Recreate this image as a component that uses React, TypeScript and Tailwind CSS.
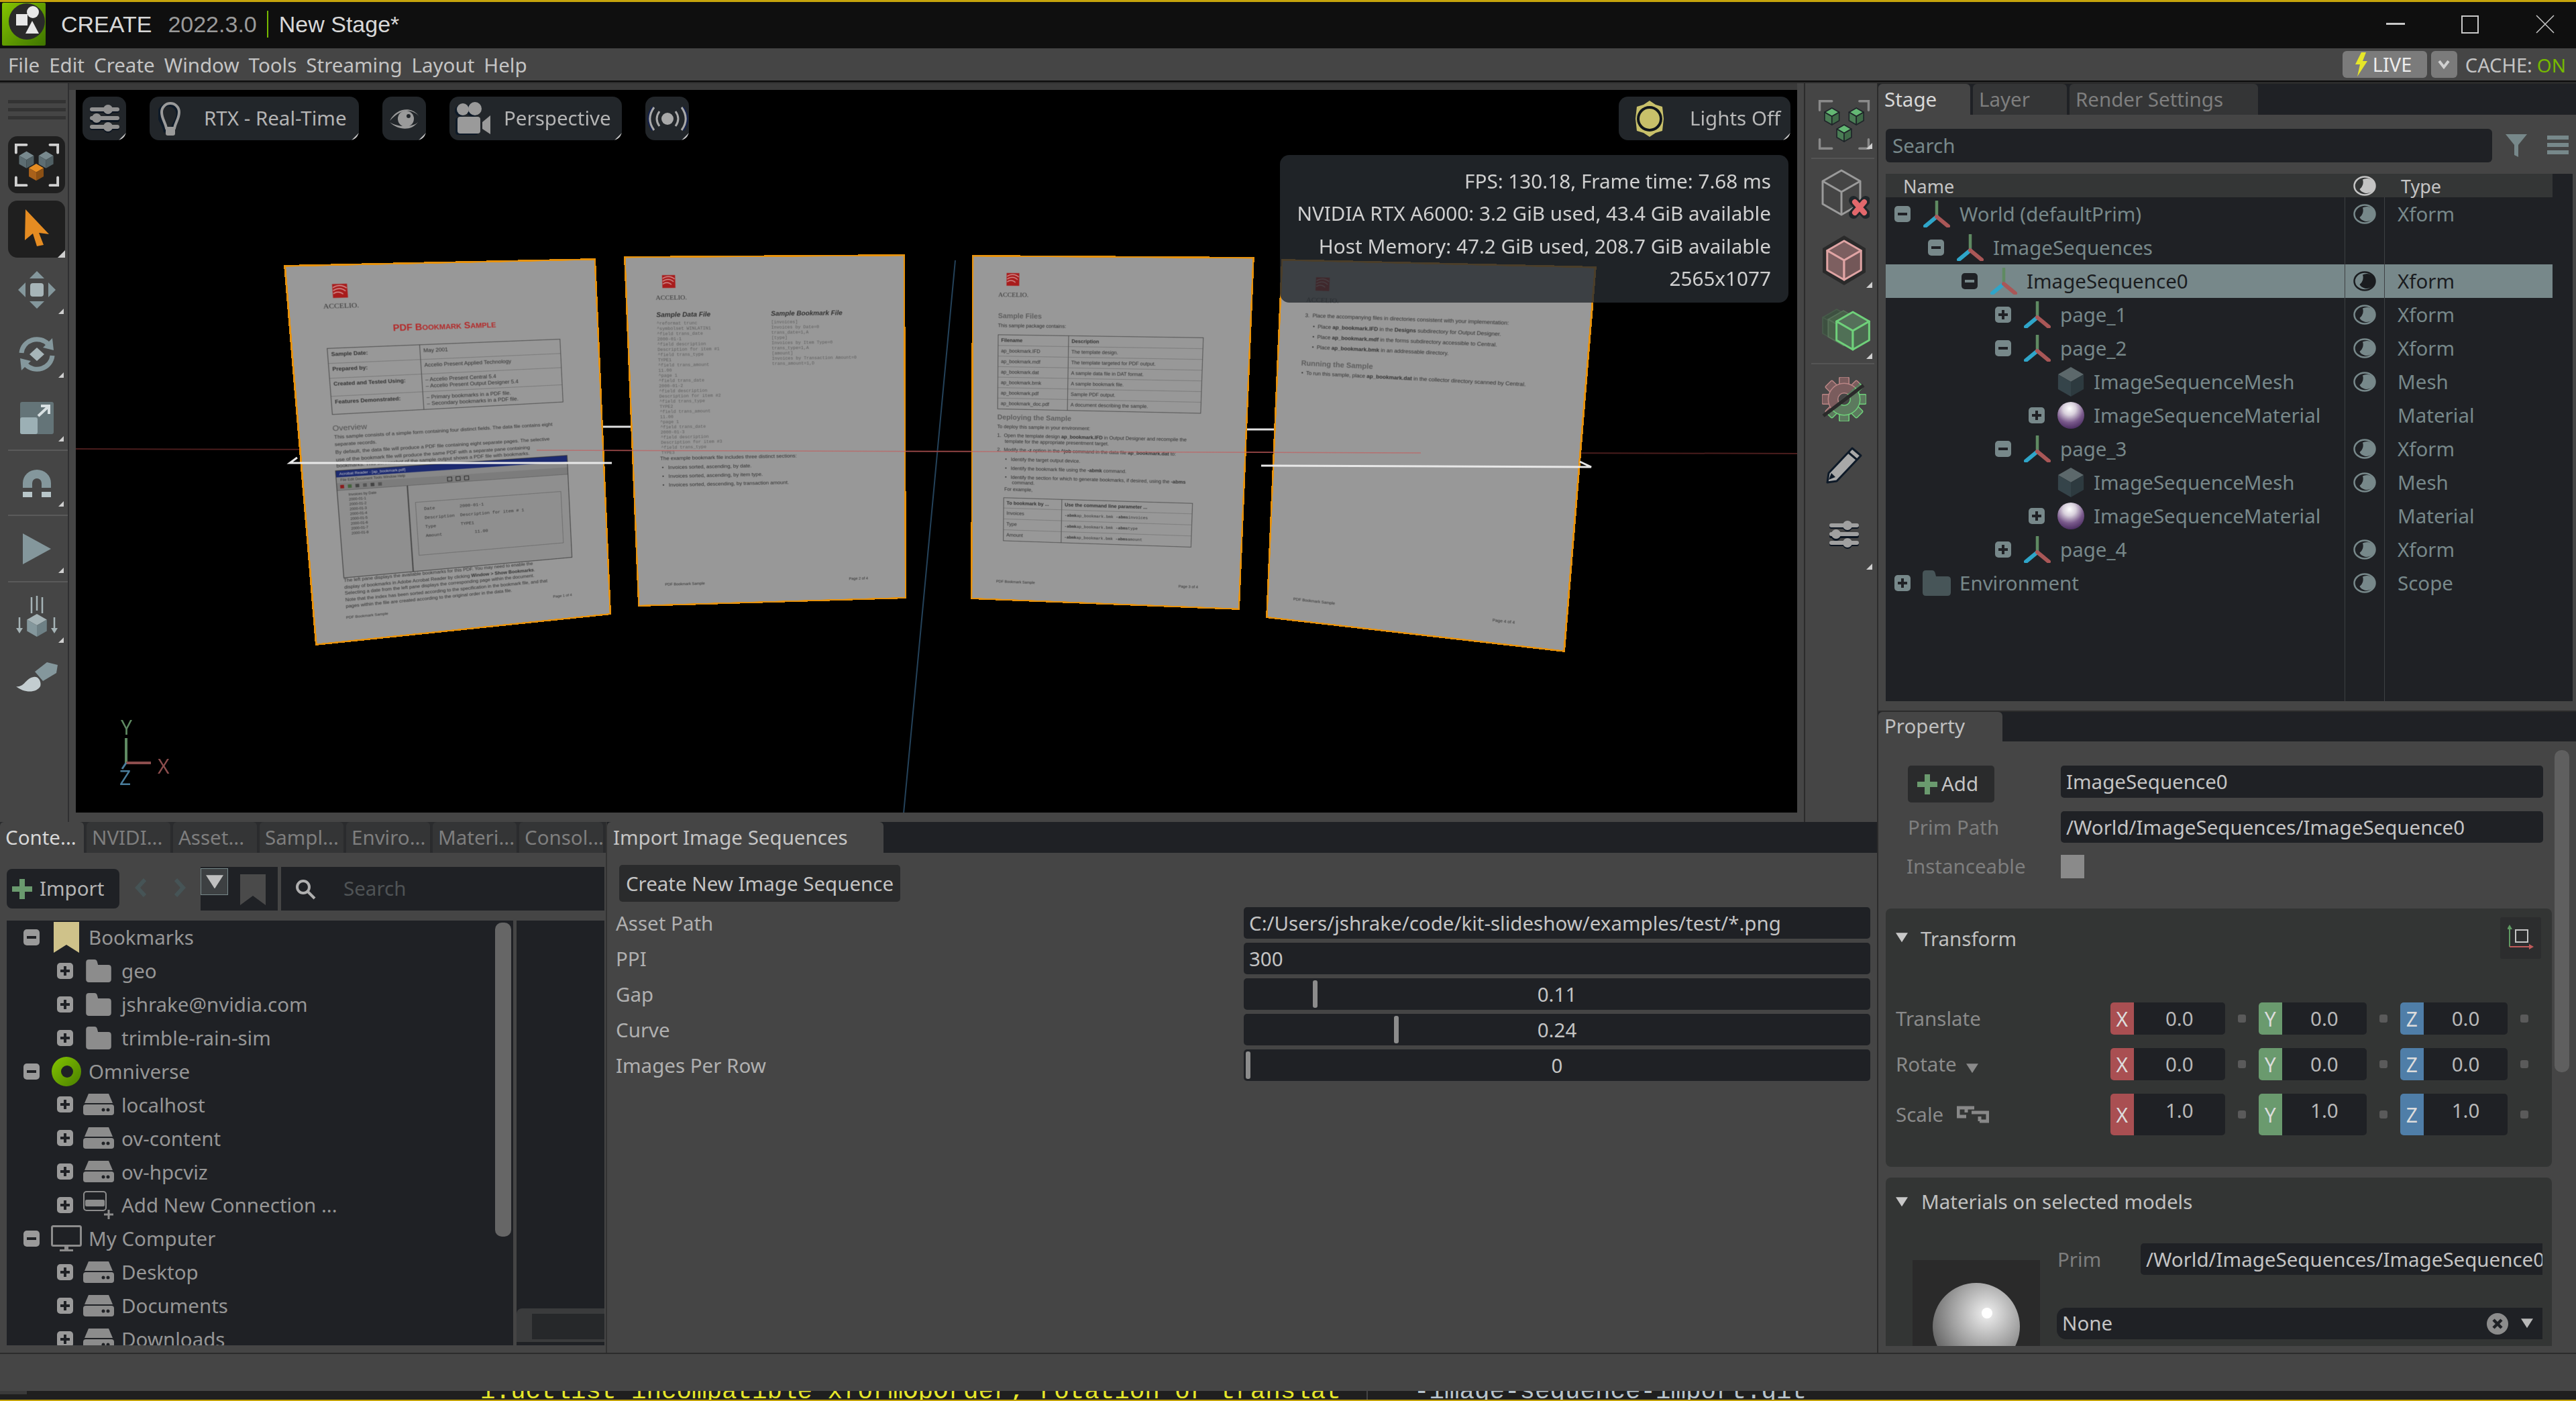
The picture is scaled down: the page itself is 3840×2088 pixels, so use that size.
import React from "react";

type P = [number, number];
const VX = 113;
const VY = 134;

function quadMatrix(w: number, h: number, q: P[]) {
  const [[x0, y0], [x1, y1], [x2, y2], [x3, y3]] = q.map(([x, y]) => [x - VX, y - VY]);
  const dx1 = x1 - x2, dx2 = x3 - x2, sx = x0 - x1 + x2 - x3;
  const dy1 = y1 - y2, dy2 = y3 - y2, sy = y0 - y1 + y2 - y3;
  const den = dx1 * dy2 - dx2 * dy1;
  const g = (sx * dy2 - dx2 * sy) / den;
  const k = (dx1 * sy - sx * dy1) / den;
  const a = x1 - x0 + g * x1, b = x3 - x0 + k * x3;
  const d = y1 - y0 + g * y1, e = y3 - y0 + k * y3;
  return `matrix3d(${a / w},${d / w},0,${g / w},${b / h},${e / h},0,${k / h},0,0,1,0,${x0},${y0},0,1)`;
}

function Iso({ cx, cy, r, t, l, rr, stroke, sw = 0 }: { cx: number; cy: number; r: number; t: string; l: string; rr: string; stroke?: string; sw?: number }) {
  const a = r * 0.87, b = r * 0.5;
  return (
    <g stroke={stroke} strokeWidth={sw} strokeLinejoin="round">
      <polygon fill={t} points={`${cx},${cy - r} ${cx + a},${cy - b} ${cx},${cy} ${cx - a},${cy - b}`} />
      <polygon fill={l} points={`${cx - a},${cy - b} ${cx},${cy} ${cx},${cy + r} ${cx - a},${cy + b}`} />
      <polygon fill={rr} points={`${cx + a},${cy - b} ${cx},${cy} ${cx},${cy + r} ${cx + a},${cy + b}`} />
    </g>
  );
}

function Brackets({ c, w = 4 }: { c: string; w?: number }) {
  return (
    <g fill="none" stroke={c} strokeWidth={w} strokeLinecap="round">
      <path d="M4 16V4H20" /><path d="M56 4H68V16" /><path d="M4 54V66H20" /><path d="M56 66H68V54" />
    </g>
  );
}

function Corner({ c = "#c9c9c9" }: { c?: string }) {
  return (
    <svg width="11" height="11" viewBox="0 0 11 11" className="absolute right-0 bottom-0">
      <polygon points="11,0 11,11 0,11" fill={c} />
    </svg>
  );
}

const TG = "#84979c";

function SliderIcon({ c = "#909090", shadow = "#0b1420" }: { c?: string; shadow?: string }) {
  const r = (y: number, x: number, col: string) => (
    <g key={`${y}${col}`}>
      <rect x="4" y={y - 3} width="44" height="6" rx="3" fill={col} />
      <circle cx={x} cy={y} r="7" fill={col} />
    </g>
  );
  return (
    <svg width="52" height="46" viewBox="0 0 52 46">
      {r(11, 31, shadow)}{r(25, 14, shadow)}{r(37, 31, shadow)}
      {r(9, 31, c)}{r(22, 14, c)}{r(35, 31, c)}
    </svg>
  );
}

function LeftTool({ children, corner = true, h = "h-[95px]" }: { children: React.ReactNode; corner?: boolean; h?: string }) {
  return (
    <div className={`relative w-[85px] ${h} flex items-center justify-center shrink-0`}>
      {children}
      {corner && <span className="absolute right-[2px] bottom-[12px]"><svg width="8" height="8" viewBox="0 0 8 8" className="block"><polygon points="8,0 8,8 0,8" fill="#cfcfcf" /></svg></span>}
    </div>
  );
}

function Sep() {
  return <div className="h-[2px] w-[90px] bg-[#5a5a5a] shrink-0" />;
}

function LeftToolbar() {
  return (
    <div className="w-[101px] shrink-0 flex flex-col items-start pl-[12px] pt-[25px]">
      <div className="flex flex-col gap-[7px] w-[86px]">
        <div className="h-[5px] bg-[#333]" /><div className="h-[5px] bg-[#333]" /><div className="h-[5px] bg-[#333]" />
      </div>
      <div className="mt-[25px] w-[85px] h-[85px] rounded-[14px] bg-[#1f1f1f] flex items-center justify-center">
        <svg width="70" height="70" viewBox="0 0 72 70">
          <Brackets c="#d0d0d0" />
          <Iso cx={20} cy={27} r={13} t="#78898e" l="#5d6d72" rr="#505f63" />
          <Iso cx={50} cy={27} r={13} t="#78898e" l="#5d6d72" rr="#505f63" />
          <Iso cx={35} cy={46} r={13} t="#e58c22" l="#a9611a" rr="#8b5014" />
        </svg>
      </div>
      <div className="relative mt-[11px] w-[85px] h-[85px] rounded-[14px] bg-[#1f1f1f] flex items-center justify-center">
        <svg width="40" height="56" viewBox="0 0 40 56" className="-mt-[6px]"><polygon points="3,1 38,38 23,36 30,54 20,56 14,37 2,47" fill="#e58c22" /></svg>
        <Corner c="#cfcfcf" />
      </div>
      <LeftTool h="h-[96px]">
        <svg width="58" height="58" viewBox="0 0 58 58" fill={TG}>
          <polygon points="29,1 40,12 18,12" /><polygon points="29,57 40,46 18,46" /><polygon points="1,29 12,18 12,40" /><polygon points="57,29 46,18 46,40" />
          <rect x="19" y="19" width="20" height="20" rx="4" fill="#a7b5b8" />
        </svg>
      </LeftTool>
      <LeftTool>
        <svg width="58" height="56" viewBox="0 0 58 56" fill="none" stroke={TG} strokeWidth="7">
          <path d="M6 26A23 22 0 0 1 46 13" /><path d="M52 30A23 22 0 0 1 12 43" />
          <polygon points="52,4 54,22 38,18" fill={TG} stroke="none" /><polygon points="6,52 4,34 20,38" fill={TG} stroke="none" />
          <polygon points="29,18 40,28 29,38 18,28" fill="#a7b5b8" stroke="none" />
        </svg>
      </LeftTool>
      <LeftTool>
        <svg width="52" height="50" viewBox="0 0 52 50">
          <rect x="1" y="1" width="50" height="48" rx="3" fill="#647478" />
          <rect x="1" y="24" width="26" height="25" rx="3" fill="#9cb0b5" />
          <path d="M28 22L43 8M32 7H44V19" stroke="#d8e0e2" strokeWidth="4" fill="none" />
        </svg>
      </LeftTool>
      <Sep />
      <LeftTool>
        <svg width="50" height="46" viewBox="0 0 50 46">
          <path d="M4 30V23A21 20 0 0 1 46 23V30H32V23A7 7 0 0 0 18 23V30Z" fill={TG} />
          <rect x="4" y="36" width="14" height="8" fill="#b8c6c9" /><rect x="32" y="36" width="14" height="8" fill="#b8c6c9" />
        </svg>
      </LeftTool>
      <Sep />
      <LeftTool h="h-[97px]">
        <svg width="44" height="48" viewBox="0 0 44 48"><polygon points="1,1 43,24 1,47" fill={TG} /></svg>
      </LeftTool>
      <Sep />
      <LeftTool h="h-[102px]">
        <svg width="62" height="62" viewBox="0 0 62 62">
          <path d="M23 2V26M31 0V22M39 2V26" stroke="#a5b3b6" strokeWidth="2.5" />
          <path d="M5 32V50M57 32V50" stroke="#a5b3b6" strokeWidth="2.5" />
          <polygon points="0,48 10,48 5,56" fill="#a5b3b6" /><polygon points="52,48 62,48 57,56" fill="#a5b3b6" />
          <Iso cx={31} cy={44} r={17} t="#a5b3b6" l="#84979c" rr="#6e8085" />
        </svg>
      </LeftTool>
      <div className="w-[85px] h-[80px] flex items-center justify-center">
        <svg width="62" height="46" viewBox="0 0 62 46">
          <polygon points="62,4 46,0 28,14 40,28 60,16" fill={TG} />
          <path d="M0 36C12 38 14 24 26 22C34 20 38 30 36 36C30 46 12 46 0 36Z" fill="#c3cdd0" />
        </svg>
      </div>
    </div>
  );
}

function GearIcon() {
  const teeth = [0, 45, 90, 135, 180, 225, 270, 315];
  const gear = (fill: string, stroke: string) => (
    <g fill={fill} stroke={stroke} strokeWidth="1.5">
      {teeth.map((t) => <rect key={t} x="25" y="0" width="14" height="14" rx="2" transform={`rotate(${t} 32 32)`} />)}
      <circle cx="32" cy="32" r="23" />
      <circle cx="32" cy="32" r="9" fill="#454545" />
    </g>
  );
  return (
    <svg width="66" height="66" viewBox="0 0 64 64">
      <defs>
        <clipPath id="gearTop"><polygon points="0,0 64,0 0,58" /></clipPath>
        <clipPath id="gearBot"><polygon points="64,0 64,64 0,64 0,58" /></clipPath>
      </defs>
      <g clipPath="url(#gearTop)">{gear("#7a5c5d", "#b98585")}</g>
      <g clipPath="url(#gearBot)">{gear("#5c7a5e", "#6fd07a")}</g>
      <line x1="2" y1="56" x2="60" y2="12" stroke="#2a2a2a" strokeWidth="5" />
    </svg>
  );
}

function RightTool({ children, h, corner = true }: { children: React.ReactNode; h: string; corner?: boolean }) {
  return (
    <div className={`relative w-full ${h} flex items-center justify-center shrink-0`}>
      {children}
      {corner && <span className="absolute right-[6px] bottom-[6px]"><svg width="9" height="9" viewBox="0 0 9 9" className="block"><polygon points="9,0 9,9 0,9" fill="#cfcfcf" /></svg></span>}
    </div>
  );
}

function RightToolbar() {
  return (
    <div className="w-[110px] shrink-0 border-l-2 border-[#2b2b2b] flex flex-col pt-[20px] ml-[10px] pl-[9px] pr-[2px]">
      <RightTool h="h-[84px]">
        <svg width="82" height="80" viewBox="0 0 72 70">
          <Brackets c="#8a8a8a" w={3} />
          <Iso cx={20} cy={24} r={11} t="#64b874" l="#4a7d55" rr="#3f6b48" stroke="#20262a" sw={1.5} />
          <Iso cx={52} cy={24} r={11} t="#64b874" l="#4a7d55" rr="#3f6b48" stroke="#20262a" sw={1.5} />
          <Iso cx={36} cy={46} r={11} t="#64b874" l="#4a7d55" rr="#3f6b48" stroke="#20262a" sw={1.5} />
        </svg>
      </RightTool>
      <div className="h-[2px] w-[94px] bg-[#555] mt-[7px] shrink-0" />
      <RightTool h="h-[104px]" corner={false}>
        <svg width="76" height="76" viewBox="0 0 76 76">
          <g fill="none" stroke="#9a9a9a" strokeWidth="3" strokeLinejoin="round">
            <polygon points="34,3 62,19 62,53 34,69 6,53 6,19" />
            <path d="M6 19L34 35L62 19M34 35V69" />
          </g>
          <path d="M52 48L70 68M70 48L52 68" stroke="#20262a" strokeWidth="14" strokeLinecap="round" />
          <path d="M54 50L68 66M68 50L54 66" stroke="#e2686c" strokeWidth="8" strokeLinecap="round" />
        </svg>
      </RightTool>
      <RightTool h="h-[94px]">
        <svg width="68" height="76" viewBox="0 0 68 76">
          <polygon points="34,1 66,20 66,56 34,75 2,56 2,20" fill="#2a2a2a" />
          <Iso cx={34} cy={38} r={29} t="#7d5f60" l="#7d5f60" rr="#735758" stroke="#e0a4a4" sw={3} />
        </svg>
      </RightTool>
      <RightTool h="h-[106px]">
        <svg width="78" height="78" viewBox="0 0 78 78">
          <Iso cx={28} cy={36} r={24} t="#3d5040" l="#3d5040" rr="#3d5040" stroke="#475a4a" sw={2} />
          <Iso cx={38} cy={40} r={26} t="#486049" l="#486049" rr="#486049" stroke="#567058" sw={2} />
          <Iso cx={52} cy={44} r={28} t="#55705a" l="#507056" rr="#4b6850" stroke="#6fd07a" sw={3} />
        </svg>
      </RightTool>
      <div className="h-[2px] w-[94px] bg-[#555] shrink-0" />
      <RightTool h="h-[104px]" corner={false}><GearIcon /></RightTool>
      <RightTool h="h-[92px]" corner={false}>
        <svg width="56" height="56" viewBox="0 0 56 56">
          <polygon points="40,3 53,14 17,52 3,54 5,40" fill="#a8a8a8" stroke="#0e1a28" strokeWidth="3" strokeLinejoin="round" />
          <path d="M34 9L47 20" stroke="#0e1a28" strokeWidth="3" />
          <polygon points="5,50 9,40 15,46" fill="#0e1a28" />
        </svg>
      </RightTool>
      <RightTool h="h-[116px]">
        <SliderIcon c="#a0a0a0" />
      </RightTool>
    </div>
  );
}

function PageFrame({ q, children }: { q: P[]; children: React.ReactNode }) {
  return (
    <div
      className="absolute left-0 top-0 w-[1000px] h-[1300px] bg-[#989898] border-[6px] border-[#e8920c] overflow-hidden origin-top-left"
      style={{ transform: quadMatrix(1000, 1300, q) }}
    >
      <div className="relative w-full h-full blur-[1px] text-[#303030] font-['Liberation_Sans',sans-serif]">{children}</div>
    </div>
  );
}

function T({ x, y, s = 20, b = false, c, m = false, children }: { x: number; y: number; s?: number; b?: boolean; c?: string; m?: boolean; children: React.ReactNode }) {
  return (
    <div
      className={`absolute whitespace-nowrap leading-none ${b ? "font-bold" : ""} ${m ? "font-['Liberation_Mono',monospace]" : ""}`}
      style={{ left: x, top: y, fontSize: s, color: c }}
    >
      {children}
    </div>
  );
}

function Logo({ x, y, tx, ty }: { x: number; y: number; tx: number; ty: number }) {
  return (
    <>
      <svg className="absolute" style={{ left: x, top: y }} width="46" height="46" viewBox="0 0 46 46">
        <rect width="46" height="46" fill="#a81c1c" />
        <path d="M2 12C16 2 32 4 44 14M2 22C16 12 30 14 40 24M2 32C12 24 24 26 32 34" stroke="#d8a0a0" strokeWidth="3" fill="none" />
      </svg>
      <T x={tx} y={ty} s={24} c="#333"><span className="font-['Liberation_Serif',serif]">ACCELIO.</span></T>
    </>
  );
}

function Table({ x, y, w, div, rows, hs = 40 }: { x: number; y: number; w: number; div: number; rows: [React.ReactNode, React.ReactNode][]; hs?: number }) {
  return (
    <div className="absolute border-2 border-[#444]" style={{ left: x, top: y, width: w }}>
      {rows.map((r, i) => (
        <div key={i} className="flex border-b border-[#555] last:border-b-0" style={{ minHeight: hs }}>
          <div className="border-r-2 border-[#444] px-[10px] py-[8px] text-[18px] leading-[22px] whitespace-nowrap" style={{ width: div }}>{r[0]}</div>
          <div className="px-[10px] py-[8px] text-[18px] leading-[22px] whitespace-nowrap">{r[1]}</div>
        </div>
      ))}
    </div>
  );
}

function Page1() {
  const shot = ["Invoices by Date", "2000-01-1", "2000-01-2", "2000-01-3", "2000-01-4", "2000-01-5", "2000-01-6", "2000-01-7", "2000-01-8"];
  return (
    <PageFrame q={[[423, 395], [888, 385], [911, 916], [470, 962]]}>
      <Logo x={135} y={60} tx={103} ty={120} />
      <T x={314} y={197} s={31} b c="#b42828">PDF B<span className="text-[24px]">OOKMARK</span> S<span className="text-[24px]">AMPLE</span></T>
      <Table x={104} y={272} w={756} div={290} hs={50} rows={[
        [<b>Sample Date:</b>, "May 2001"],
        [<b>Prepared by:</b>, "Accelio Present Applied Technology"],
        [<b>Created and Tested Using:</b>, <span>– Accelio Present Central 5.4<br />– Accelio Present Output Designer 5.4</span>],
        [<b>Features Demonstrated:</b>, <span>– Primary bookmarks in a PDF file.<br />– Secondary bookmarks in a PDF file.</span>],
      ]} />
      <T x={102} y={530} s={26} c="#505050">Overview</T>
      <T x={105} y={565} s={17}>This sample consists of a simple form containing four distinct fields. The data file contains eight</T>
      <T x={105} y={590} s={17}>separate records.</T>
      <T x={105} y={617} s={17}>By default, the data file will produce a PDF file containing eight separate pages. The selective</T>
      <T x={105} y={643} s={17}>use of the bookmark file will produce the same PDF with a separate pane containing</T>
      <T x={105} y={664} s={17}>bookmarks. This screenshot of the sample output shows a PDF file with bookmarks.</T>
      <div className="absolute left-[100px] top-[688px] w-[765px] h-[377px] bg-[#8f8f8f] border-2 border-[#333] overflow-hidden">
        <div className="h-[22px] bg-[#1c2a70] text-[#ccc] text-[13px] pl-[10px] leading-[22px]">Acrobat Reader - [ap_bookmark.pdf]</div>
        <div className="h-[20px] bg-[#888] text-[12px] pl-[12px] leading-[20px]">File Edit Document Tools Window Help</div>
        <div className="h-[26px] bg-[#7c7c7c] border-b border-[#444] flex items-center gap-[12px] pl-[10px]">
          <span className="w-[12px] h-[12px] bg-[#8a1c1c]" /><span className="w-[12px] h-[12px] bg-[#44643c]" />
          <span className="w-[12px] h-[12px] bg-[#444]" /><span className="w-[12px] h-[12px] bg-[#555]" /><span className="w-[12px] h-[12px] bg-[#444]" /><span className="w-[12px] h-[12px] bg-[#555]" />
          <span className="ml-[200px] w-[16px] h-[16px] border-2 border-[#222]" /><span className="w-[16px] h-[16px] border-2 border-[#222]" /><span className="w-[16px] h-[16px] border-2 border-[#222]" />
        </div>
        <div className="flex h-full">
          <div className="w-[225px] border-r-4 border-[#444] pl-[10px] pt-[8px] text-[12px] leading-[17px]">
            {shot.map((s) => <div key={s} className="pl-[24px]">{s}</div>)}
          </div>
          <div className="flex-1 relative">
            <div className="absolute left-[20px] top-[60px] w-[490px] h-[190px] border border-[#444] font-['Liberation_Mono',monospace] text-[15px] leading-[32px] pl-[26px] pt-[10px]">
              <div>Date &nbsp; &nbsp; &nbsp; &nbsp; 2000-01-1</div>
              <div>Description &nbsp;Description for item # 1</div>
              <div>Type &nbsp; &nbsp; &nbsp; &nbsp; TYPE1</div>
              <div>Amount &nbsp; &nbsp; &nbsp; &nbsp; &nbsp; &nbsp;11.00</div>
            </div>
          </div>
        </div>
      </div>
      <T x={100} y={1066} s={16}>The left pane displays the available bookmarks for this PDF. You may need to enable the</T>
      <T x={100} y={1090} s={16}>display of bookmarks in Adobe Acrobat Reader by clicking <b>Window &gt; Show Bookmarks</b>.</T>
      <T x={100} y={1111} s={16}>Selecting a date from the left pane displays the corresponding page within the document.</T>
      <T x={100} y={1135} s={16}>Note that the index has been sorted according to the specification in the bookmark file, and that</T>
      <T x={100} y={1158} s={16}>pages within the file are created according to the original order in the data file.</T>
      <T x={791} y={1197} s={13}>Page 1 of 4</T>
      <T x={98} y={1199} s={13}>PDF Bookmark Sample</T>
    </PageFrame>
  );
}

function Page2() {
  const lines = ["^reformat trunc", "^symbolset WINLATIN1", "^field trans_date", "2000-01-1", "^field description", "Description for item #1", "^field trans_type", "TYPE1", "^field trans_amount", "11.00", "^page 1", "^field trans_date", "2000-01-2", "^field description", "Description for item #2", "^field trans_type", "TYPE2", "^field trans_amount", "11.00", "^page 1", "^field trans_date", "2000-01-3", "^field description", "Description for item #3", "^field trans_type", "TYPE3"];
  const right = ["[invoices]", "Invoices by Date=0", "trans_date=1,A", "[type]", "Invoices by Item Type=0", "trans_type=1,A", "[amount]", "Invoices by Transaction Amount=0", "trans_amount=1,D"];
  return (
    <PageFrame q={[[930, 382], [1349, 379], [1351, 892], [951, 904]]}>
      <Logo x={125} y={62} tx={100} ty={130} />
      <T x={100} y={192} s={24} b><i>Sample Data File</i></T>
      <T x={508} y={192} s={24} b><i>Sample Bookmark File</i></T>
      {lines.map((l, i) => <T key={i} m x={100} y={228 + i * 19} s={16} c="#5e5e5e">{l}</T>)}
      {right.map((l, i) => <T key={i} m x={508} y={228 + i * 19} s={16} c="#5e5e5e">{l}</T>)}
      <T x={95} y={722} s={19}>The example bookmark file includes three distinct sections:</T>
      {["Invoices sorted, ascending, by date.", "Invoices sorted, ascending, by item type.", "Invoices sorted, descending, by transaction amount."].map((l, i) => (
        <T key={l} x={100} y={756 + i * 33} s={19}>•&nbsp;&nbsp;&nbsp;{l}</T>
      ))}
      <T x={96} y={1204} s={14}>PDF Bookmark Sample</T>
      <T x={778} y={1202} s={14}>Page 2 of 4</T>
    </PageFrame>
  );
}

function Page3() {
  return (
    <PageFrame q={[[1449, 380], [1870, 383], [1848, 909], [1447, 893]]}>
      <Logo x={120} y={58} tx={90} ty={124} />
      <T x={90} y={200} s={26} b c="#5e5e5e">Sample Files</T>
      <T x={90} y={240} s={18}>This sample package contains:</T>
      <Table x={90} y={282} w={738} div={256} hs={39} rows={[
        [<b>Filename</b>, <b>Description</b>],
        ["ap_bookmark.IFD", "The template design."],
        ["ap_bookmark.mdf", "The template targeted for PDF output."],
        ["ap_bookmark.dat", "A sample data file in DAT format."],
        ["ap_bookmark.bmk", "A sample bookmark file."],
        ["ap_bookmark.pdf", "Sample PDF output."],
        ["ap_bookmark_doc.pdf", "A document describing the sample."],
      ]} />
      <T x={90} y={575} s={26} b c="#5e5e5e">Deploying the Sample</T>
      <T x={90} y={615} s={18}>To deploy this sample in your environment:</T>
      <T x={90} y={648} s={18}>1.&nbsp;&nbsp;Open the template design <b>ap_bookmark.IFD</b> in Output Designer and recompile the</T>
      <T x={118} y={670} s={18}>template for the appropriate presentment target.</T>
      <T x={90} y={702} s={18}>2.&nbsp;&nbsp;Modify the <b>-z</b> option in the <b>^job</b> command in the data file <b>ap_bookmark.dat</b> to:</T>
      <T x={120} y={738} s={18}>•&nbsp;&nbsp;&nbsp;Identify the target output device.</T>
      <T x={120} y={772} s={18}>•&nbsp;&nbsp;&nbsp;Identify the bookmark file using the <b>-abmk</b> command.</T>
      <T x={120} y={806} s={18}>•&nbsp;&nbsp;&nbsp;Identify the section for which to generate bookmarks, if desired, using the <b>-abms</b></T>
      <T x={146} y={826} s={18}>command.</T>
      <T x={118} y={852} s={18}>For example,</T>
      <Table x={115} y={893} w={695} div={216} hs={38} rows={[
        [<b>To bookmark by ...</b>, <b>Use the command line parameter ...</b>],
        ["Invoices", <span className="font-['Liberation_Mono',monospace] text-[15px]"><b>-abmk</b>ap_bookmark.bmk <b>-abms</b>invoices</span>],
        ["Type", <span className="font-['Liberation_Mono',monospace] text-[15px]"><b>-abmk</b>ap_bookmark.bmk <b>-abms</b>type</span>],
        ["Amount", <span className="font-['Liberation_Mono',monospace] text-[15px]"><b>-abmk</b>ap_bookmark.bmk <b>-abms</b>amount</span>],
      ]} />
      <T x={90} y={1212} s={14}>PDF Bookmark Sample</T>
      <T x={768} y={1205} s={14}>Page 3 of 4</T>
    </PageFrame>
  );
}

function Page4() {
  return (
    <PageFrame q={[[1910, 386], [2380, 397], [2333, 972], [1887, 921]]}>
      <Logo x={115} y={54} tx={85} ty={120} />
      <T x={84} y={178} s={18}>3.&nbsp;&nbsp;Place the accompanying files in directories consistent with your implementation:</T>
      <T x={112} y={216} s={18}>•&nbsp;&nbsp;Place <b>ap_bookmark.IFD</b> in the <b>Designs</b> subdirectory for Output Designer.</T>
      <T x={112} y={252} s={18}>•&nbsp;&nbsp;Place <b>ap_bookmark.mdf</b> in the forms subdirectory accessible to Central.</T>
      <T x={112} y={288} s={18}>•&nbsp;&nbsp;Place <b>ap_bookmark.bmk</b> in an addressable directory.</T>
      <T x={78} y={342} s={25} b c="#5e5e5e">Running the Sample</T>
      <T x={80} y={380} s={18}>•&nbsp;&nbsp;To run this sample, place <b>ap_bookmark.dat</b> in the collector directory scanned by Central.</T>
      <T x={88} y={1204} s={14}>PDF Bookmark Sample</T>
      <T x={759} y={1202} s={14}>Page 4 of 4</T>
    </PageFrame>
  );
}

function VpBtn({ w, children }: { w: string; children: React.ReactNode }) {
  return <div className={`relative ${w} h-[65px] rounded-[14px] bg-[#22262a] flex items-center shrink-0 overflow-hidden text-[#b4b4b4] text-[29.5px]`}>{children}<Corner /></div>;
}

function Viewport() {
  const x = (v: number) => v - VX;
  const y = (v: number) => v - VY;
  return (
    <div className="relative w-[2566px] h-[1077px] bg-black overflow-hidden shrink-0">
      <svg className="absolute inset-0" width="2566" height="1077">
        <line x1={x(1424)} y1={y(388)} x2={x(1347)} y2={y(1212)} stroke="#24425a" strokeWidth="2" />
        <line x1="0" y1={y(669)} x2="2566" y2={y(676)} stroke="#4a1d1d" strokeWidth="2" />
        <line x1={x(897)} y1={y(636)} x2={x(945)} y2={y(636)} stroke="#e0e0e0" strokeWidth="3" />
        <line x1={x(1859)} y1={y(640)} x2={x(1905)} y2={y(640)} stroke="#e0e0e0" strokeWidth="3" />
      </svg>
      <Page2 />
      <Page3 />
      <Page1 />
      <Page4 />
      <svg className="absolute inset-0" width="2566" height="1077">
        <line x1={x(800)} y1={y(671)} x2={x(2118)} y2={y(675)} stroke="#c26060" strokeWidth="1.5" opacity="0.7" />
        <path d={`M${x(443)} ${y(682)}L${x(432)} ${y(690)}H${x(912)}`} stroke="#e8e8e8" strokeWidth="3" fill="none" />
        <path d={`M${x(1880)} ${y(694)}L${x(2372)} ${y(696)}L${x(2355)} ${y(688)}`} stroke="#e8e8e8" strokeWidth="3" fill="none" />
      </svg>

      <div className="absolute left-[10px] top-[10px] flex gap-[35px]">
        <VpBtn w="w-[65px]"><div className="pl-[7px]"><SliderIcon /></div></VpBtn>
        <VpBtn w="w-[312px]">
          <svg width="36" height="52" viewBox="0 0 36 52" className="ml-[13px] shrink-0">
            <path d="M12 42C10 30 3 28 3 17A14 14 0 0 1 31 17C31 28 24 30 22 42Z" fill="none" stroke="#0e1a28" strokeWidth="5" transform="translate(-2 2)" />
            <path d="M12 40C10 30 5 26 5 16A13 13 0 0 1 31 16C31 26 26 30 24 40Z" fill="none" stroke="#9a9a9a" strokeWidth="4" />
            <rect x="11" y="40" width="14" height="11" rx="3" fill="#9a9a9a" />
          </svg>
          <span className="ml-[32px] whitespace-nowrap">RTX - Real-Time</span>
        </VpBtn>
        <VpBtn w="w-[65px]">
          <svg width="48" height="38" viewBox="0 0 48 38" className="ml-[9px]">
            <path d="M2 22C12 2 36 0 46 16C40 8 30 6 22 8C14 10 8 16 2 22Z" fill="#9a9a9a" />
            <circle cx="26" cy="19" r="12" fill="#9a9a9a" />
            <circle cx="30" cy="15" r="3" fill="#22262a" />
            <path d="M2 24C14 36 34 38 44 24C36 32 14 32 2 24Z" fill="#9a9a9a" />
          </svg>
        </VpBtn>
        <VpBtn w="w-[257px]">
          <svg width="56" height="50" viewBox="0 0 56 50" className="ml-[7px] shrink-0">
            <g fill="#0e1a28" transform="translate(-2 2)"><circle cx="12" cy="11" r="9" /><circle cx="30" cy="10" r="10" /><rect x="4" y="21" width="34" height="26" rx="4" /></g>
            <g fill="#9a9a9a"><circle cx="13" cy="11" r="9" /><circle cx="31" cy="10" r="10" /><rect x="5" y="22" width="34" height="25" rx="4" /><polygon points="42,30 54,20 54,48 42,40" /></g>
          </svg>
          <span className="ml-[18px] whitespace-nowrap">Perspective</span>
        </VpBtn>
        <VpBtn w="w-[65px]">
          <svg width="64" height="40" viewBox="0 0 64 40" className="ml-[1px]">
            <g fill="none" stroke="#16224a" strokeWidth="4"><path d="M10 3C2 14 2 26 10 37" /><path d="M55 3C63 14 63 26 55 37" /></g>
            <g fill="none" stroke="#a8a8a8" strokeWidth="3"><path d="M12 3C4 14 4 26 12 37" /><path d="M53 3C61 14 61 26 53 37" /><path d="M20 9C15 16 15 24 20 31" /><path d="M44 9C49 16 49 24 44 31" /></g>
            <circle cx="32" cy="20" r="9" fill="#a8a8a8" />
          </svg>
        </VpBtn>
      </div>

      <div className="absolute left-[2300px] top-[10px]">
        <VpBtn w="w-[256px]">
          <svg width="46" height="58" viewBox="0 0 46 58" className="ml-[23px] shrink-0">
            <polygon points="23,2 32,8 42,11 44,29 42,47 32,50 23,56 14,50 4,47 2,29 4,11 14,8" fill="#c8c06a" />
            <circle cx="23" cy="29" r="19" fill="#11161c" />
            <circle cx="23" cy="29" r="15" fill="#c8c06a" />
          </svg>
          <span className="ml-[37px] whitespace-nowrap text-[#b8b8b8]">Lights Off</span>
        </VpBtn>
      </div>

      <div className="absolute left-[1795px] top-[97px] w-[758px] h-[220px] rounded-[14px] bg-[rgba(38,43,48,0.81)] pr-[26px] pt-[15px] text-right text-[29.7px] leading-[48.4px] text-[#d0d0d0]">
        <div>FPS: 130.18, Frame time: 7.68 ms</div>
        <div>NVIDIA RTX A6000: 3.2 GiB used, 43.4 GiB available</div>
        <div>Host Memory: 47.2 GiB used, 208.7 GiB available</div>
        <div>2565x1077</div>
      </div>

      <div className="absolute left-[60px] top-[940px] w-[140px] h-[100px] text-[30px] leading-none">
        <svg className="absolute left-0 top-0" width="140" height="100">
          <line x1="15" y1="26" x2="15" y2="64" stroke="#5f8a62" strokeWidth="4" />
          <line x1="15" y1="63" x2="52" y2="63" stroke="#8c4d4d" strokeWidth="4" />
          <line x1="15" y1="63" x2="9" y2="72" stroke="#4a7d9c" strokeWidth="3" />
        </svg>
        <span className="absolute left-[7px] top-[-5px] text-[#5f8a62]">Y</span>
        <span className="absolute left-[62px] top-[53px] text-[#8c4d4d]">X</span>
        <span className="absolute left-[5px] top-[70px] text-[#4a7d9c]">Z</span>
      </div>
    </div>
  );
}

function Exp({ plus = false, dark = false, c = "#77888a" }: { plus?: boolean; dark?: boolean; c?: string }) {
  return (
    <svg width="24" height="24" viewBox="0 0 24 24" className="shrink-0">
      <rect width="24" height="24" rx="5" fill={dark ? "#1f2125" : c} />
      <rect x="5" y="10" width="14" height="4" fill={dark ? "#77888a" : "#1f2125"} />
      {plus && <rect x="10" y="5" width="4" height="14" fill={dark ? "#77888a" : "#1f2125"} />}
    </svg>
  );
}

function AxisIcon() {
  return (
    <svg width="40" height="40" viewBox="0 0 40 40" className="shrink-0">
      <path d="M20 1V24" stroke="#5f8a62" strokeWidth="4.5" strokeLinecap="round" />
      <path d="M20 24L3 38" stroke="#2fa5c9" strokeWidth="6" strokeLinecap="round" />
      <path d="M20 24L37 38" stroke="#a95757" strokeWidth="6" strokeLinecap="round" />
    </svg>
  );
}

function MeshIcon() {
  return (
    <svg width="40" height="46" viewBox="0 0 40 46" className="shrink-0">
      <Iso cx={20} cy={23} r={22} t="#5c686b" l="#35444a" rr="#2d3a3f" />
    </svg>
  );
}

let sphereId = 0;
function MaterialIcon() {
  const id = `sp${sphereId++}`;
  return (
    <svg width="40" height="42" viewBox="0 0 40 42" className="shrink-0">
      <defs>
        <radialGradient id={id} cx="0.45" cy="0.25" r="0.8">
          <stop offset="0" stopColor="#ffffff" />
          <stop offset="0.3" stopColor="#d8d0dc" />
          <stop offset="0.65" stopColor="#7a5a8c" />
          <stop offset="1" stopColor="#43265a" />
        </radialGradient>
      </defs>
      <circle cx="20" cy="21" r="20" fill={`url(#${id})`} />
    </svg>
  );
}

function FolderIcon({ c = "#475558", w = 42, h = 38 }: { c?: string; w?: number; h?: number }) {
  return (
    <svg width={w} height={h} viewBox="0 0 42 38" className="shrink-0">
      <path d="M0 5Q0 0 5 0H14Q18 0 19 5L20 9H37Q42 9 42 14V33Q42 38 37 38H5Q0 38 0 33Z" fill={c} />
    </svg>
  );
}

function Eye({ c = "#77888a" }: { c?: string }) {
  return (
    <svg width="34" height="30" viewBox="0 0 34 30" className="shrink-0">
      <ellipse cx="17" cy="15" rx="15.5" ry="13.5" fill="none" stroke={c} strokeWidth="2.5" />
      <path d="M14 5.5A12 11 0 1 1 9.5 20A13 13 0 0 0 14 5.5Z" fill={c} />
    </svg>
  );
}

type Kind = "axis" | "mesh" | "mat" | "folder";
type Row = { d: number; exp?: "+" | "-"; k: Kind; n: string; t?: string; eye?: boolean; sel?: boolean };

const stageRows: Row[] = [
  { d: 0, exp: "-", k: "axis", n: "World (defaultPrim)", t: "Xform", eye: true },
  { d: 1, exp: "-", k: "axis", n: "ImageSequences" },
  { d: 2, exp: "-", k: "axis", n: "ImageSequence0", t: "Xform", eye: true, sel: true },
  { d: 3, exp: "+", k: "axis", n: "page_1", t: "Xform", eye: true },
  { d: 3, exp: "-", k: "axis", n: "page_2", t: "Xform", eye: true },
  { d: 4, k: "mesh", n: "ImageSequenceMesh", t: "Mesh", eye: true },
  { d: 4, exp: "+", k: "mat", n: "ImageSequenceMaterial", t: "Material" },
  { d: 3, exp: "-", k: "axis", n: "page_3", t: "Xform", eye: true },
  { d: 4, k: "mesh", n: "ImageSequenceMesh", t: "Mesh", eye: true },
  { d: 4, exp: "+", k: "mat", n: "ImageSequenceMaterial", t: "Material" },
  { d: 3, exp: "+", k: "axis", n: "page_4", t: "Xform", eye: true },
  { d: 0, exp: "+", k: "folder", n: "Environment", t: "Scope", eye: true },
];

const stagePad = ["pl-[13px]", "pl-[63px]", "pl-[113px]", "pl-[163px]", "pl-[213px]"];

function StageRow({ r }: { r: Row }) {
  return (
    <div className={`flex h-[50px] ${r.sel ? "bg-[#77888a] text-[#1a1c1f]" : "text-[#77888a]"}`}>
      <div className={`w-[684px] flex items-center ${stagePad[r.d]}`}>
        <span className="w-[24px] shrink-0">{r.exp && <Exp plus={r.exp === "+"} dark={r.sel} />}</span>
        <span className="w-[40px] ml-[19px] shrink-0 flex justify-center">
          {r.k === "axis" && <AxisIcon />}
          {r.k === "mesh" && <MeshIcon />}
          {r.k === "mat" && <MaterialIcon />}
          {r.k === "folder" && <FolderIcon />}
        </span>
        <span className="ml-[14px] whitespace-nowrap">{r.n}</span>
      </div>
      <div className="w-[60px] flex items-center justify-center border-l border-r border-[#3d4043]">
        {r.eye && <Eye c={r.sel ? "#1a1c1f" : "#77888a"} />}
      </div>
      <div className="pl-[19px] flex items-center">{r.t}</div>
    </div>
  );
}

function StagePanel() {
  return (
    <div className="h-[937px] flex flex-col shrink-0">
      <div className="h-[3px] bg-[#2b2b2b] shrink-0" />
      <div className="h-[46px] bg-[#1f2125] flex gap-[4px] shrink-0">
        <div className="w-[137px] pl-[9px] rounded-t-[6px] bg-[#454545] text-[#d8d8d8] leading-[46px]">Stage</div>
        <div className="w-[140px] pl-[9px] rounded-t-[6px] bg-[#343536] text-[#7e7e7e] leading-[46px]">Layer</div>
        <div className="w-[281px] pl-[9px] rounded-t-[6px] bg-[#343536] text-[#7e7e7e] leading-[46px]">Render Settings</div>
      </div>
      <div className="h-[88px] flex items-start pt-[21px] pl-[11px] shrink-0">
        <div className="w-[904px] h-[50px] rounded-[6px] bg-[#1f2125] text-[#77888a] pl-[10px] leading-[50px]">Search</div>
        <svg width="32" height="34" viewBox="0 0 32 34" className="ml-[20px] mt-[8px]"><polygon points="0,0 32,0 19,16 19,34 13,31 13,16" fill="#77888a" /></svg>
        <div className="ml-[30px] mt-[10px] w-[32px] flex flex-col gap-[5px]">
          <div className="h-[6px] bg-[#77888a]" /><div className="h-[6px] bg-[#77888a]" /><div className="h-[6px] bg-[#77888a]" />
        </div>
      </div>
      <div className="ml-[11px] w-[1024px] h-[786px] bg-[#1f2125] shrink-0 overflow-hidden relative">
        <div className="w-[994px]">
          <div className="h-[35px] bg-[#343636] flex text-[#c4c4c4] text-[27px]">
            <div className="w-[684px] pl-[26px] leading-[38px]">Name</div>
            <div className="w-[60px] flex items-center justify-center"><Eye c="#c4c4c4" /></div>
            <div className="pl-[24px] leading-[38px]">Type</div>
          </div>
          {stageRows.map((r, i) => <StageRow key={i} r={r} />)}
        </div>
        <div className="absolute left-[684px] top-[635px] bottom-0 w-[60px] border-l border-r border-[#3d4043]" />
      </div>
    </div>
  );
}

function Vec({ label, c, v, w, top = false }: { label: string; c: string; v: string; w: string; top?: boolean }) {
  return (
    <div className={`flex ${w} rounded-[5px] overflow-hidden bg-[#1f2125]`}>
      <div className={`w-[35px] flex items-center justify-center text-[#dcdcdc] text-[30px] ${c}`}>{label}</div>
      <div className={`flex-1 flex justify-center text-[#b8b8b8] ${top ? "items-start pt-[3px]" : "items-center"}`}>{v}</div>
    </div>
  );
}

function VecRow({ label, v, h, extra, top = false }: { label: string; v: string; h: string; extra?: React.ReactNode; top?: boolean }) {
  const dot = <div className="w-[12px] h-[12px] rounded-[3px] bg-[#5a5a5a] mx-[19px] self-center" />;
  return (
    <div className={`flex ${h}`}>
      <div className="w-[325px] flex items-center text-[#8a8a8a] gap-[14px]">{label}{extra}</div>
      <Vec label="X" c="bg-[#a94f52]" v={v} w="w-[174px]" top={top} />
      {dot}
      <Vec label="Y" c="bg-[#6a9a6e]" v={v} w="w-[164px]" top={top} />
      {dot}
      <Vec label="Z" c="bg-[#4f7ea8]" v={v} w="w-[163px]" top={top} />
      {dot}
    </div>
  );
}

function Tri({ c = "#c8c8c8", w = 18 }: { c?: string; w?: number }) {
  return <svg width={w} height={w * 0.8} viewBox="0 0 18 14" className="shrink-0"><polygon points="0,0 18,0 9,14" fill={c} /></svg>;
}

function PropertyPanel() {
  return (
    <div className="flex-1 flex flex-col relative min-h-0">
      <div className="h-[46px] bg-[#1f2125] shrink-0 border-t-2 border-[#2b2b2b]">
        <div className="w-[185px] h-full bg-[#454545] rounded-t-[6px] pl-[9px] text-[#c0c0c0] leading-[42px]">Property</div>
      </div>
      <div className="h-[901px] overflow-hidden pl-[11px] shrink-0 relative">
        <div className="pt-[36px] pl-[33px] pr-[49px] flex flex-col">
          <div className="flex h-[55px]">
            <div className="w-[129px] h-[55px] rounded-[5px] bg-[#2a2b2c] flex items-center pl-[14px] gap-[6px] text-[#c4c4c4]">
              <svg width="30" height="40" viewBox="0 0 30 40"><path d="M11 5H19V16H30V24H19V35H11V24H0V16H11Z" fill="#6a9a6e" /></svg>
              Add
            </div>
            <div className="ml-[99px] w-[719px] h-[48px] rounded-[5px] bg-[#1f2125] pl-[8px] leading-[48px] text-[#c4c4c4]">ImageSequence0</div>
          </div>
          <div className="flex h-[47px] mt-[13px]">
            <div className="w-[228px] text-[#7e7e7e] leading-[47px]">Prim Path</div>
            <div className="w-[719px] h-[47px] rounded-[5px] bg-[#1f2125] pl-[8px] leading-[47px] text-[#c4c4c4] whitespace-nowrap">/World/ImageSequences/ImageSequence0</div>
          </div>
          <div className="flex h-[35px] mt-[18px] items-center">
            <div className="w-[228px] text-[#7e7e7e] -ml-[2px] mr-[2px]">Instanceable</div>
            <div className="w-[35px] h-[35px] bg-[#8a8a8a]" />
          </div>
        </div>
        <div className="mt-[45px] w-[993px] h-[385px] rounded-[8px] bg-[#333534] pl-[15px] pr-[16px] relative">
          <div className="flex items-center h-[87px]">
            <Tri />
            <span className="ml-[19px] mt-[3px] text-[#c0c0c0]">Transform</span>
            <div className="ml-auto w-[61px] h-[62px] bg-[#2c2d2e] rounded-[3px] flex items-center justify-center">
              <svg width="40" height="40" viewBox="0 0 40 40">
                <rect x="12" y="8" width="18" height="18" fill="none" stroke="#c4c4c4" strokeWidth="2" />
                <path d="M3 5V33" stroke="#5f9a62" strokeWidth="2" /><polygon points="3,0 7,7 -1,7" fill="#5f9a62" />
                <path d="M3 33H34" stroke="#c05a5a" strokeWidth="2" /><polygon points="39,33 32,29 32,37" fill="#c05a5a" />
              </svg>
            </div>
          </div>
          <div className="mt-[53px] flex flex-col gap-[20px]">
            <VecRow label="Translate" v="0.0" h="h-[48px]" />
            <VecRow label="Rotate" v="0.0" h="h-[48px]" extra={<span className="mt-[12px]"><Tri c="#8a8a8a" /></span>} />
            <VecRow label="Scale" v="1.0" h="h-[62px]" top extra={
              <svg width="48" height="26" viewBox="0 0 48 26" className="ml-[6px]">
                <path d="M26 3H2V16H14M22 10H46V23H34M14 10V3M34 16V23" fill="none" stroke="#888" strokeWidth="5" />
              </svg>
            } />
          </div>
        </div>
        <div className="mt-[16px] w-[993px] h-[300px] rounded-[8px] bg-[#333534] pl-[15px] relative">
          <div className="flex items-center h-[72px]">
            <Tri />
            <span className="ml-[20px] text-[#c0c0c0]">Materials on selected models</span>
          </div>
          <div className="flex">
            <div className="mt-[51px] ml-[25px] w-[190px] h-[190px] bg-[#2a2a2a] flex justify-center pt-[33px] shrink-0">
              <svg width="132" height="132" viewBox="0 0 132 132">
                <defs><radialGradient id="bigSphere" cx="0.62" cy="0.35" r="0.8"><stop offset="0" stopColor="#f0f0f0" /><stop offset="0.5" stopColor="#a0a0a0" /><stop offset="1" stopColor="#4c4c4c" /></radialGradient></defs>
                <circle cx="66" cy="66" r="65" fill="url(#bigSphere)" />
                <circle cx="82" cy="46" r="8" fill="#fff" />
              </svg>
            </div>
            <div className="ml-[25px] w-[725px]">
              <div className="flex h-[47px] mt-[26px]">
                <div className="w-[125px] pl-[1px] text-[#7e7e7e] leading-[47px]">Prim</div>
                <div className="w-[599px] h-[47px] rounded-l-[5px] bg-[#1f2125] pl-[8px] leading-[47px] text-[#c4c4c4] whitespace-nowrap overflow-hidden">/World/ImageSequences/ImageSequence0</div>
              </div>
              <div className="mt-[49px] w-[724px] h-[47px] rounded-l-[14px] bg-[#1f2125] pl-[8px] flex items-center text-[#c4c4c4]">
                None
                <svg width="34" height="34" viewBox="0 0 34 34" className="ml-auto"><circle cx="17" cy="17" r="16" fill="#8c8c8c" /><path d="M11 11L23 23M23 11L11 23" stroke="#1f2125" strokeWidth="4.5" /></svg>
                <span className="ml-[18px] mr-[14px]"><Tri c="#b8b8b8" /></span>
              </div>
            </div>
          </div>
        </div>
        <div className="absolute left-[1008px] top-[13px] w-[22px] h-[480px] rounded-[10px] bg-[#5f5f5f]" />
      </div>
    </div>
  );
}

function DriveIcon() {
  return (
    <svg width="46" height="32" viewBox="0 0 46 32" className="shrink-0">
      <path d="M8 0H38L44 14H2Z" fill="#8c8c8c" />
      <rect x="0" y="16" width="46" height="16" rx="4" fill="#8c8c8c" />
      <circle cx="30" cy="24" r="2.5" fill="#1f2125" /><circle cx="37" cy="24" r="2.5" fill="#1f2125" />
    </svg>
  );
}

type CRow = { l: 1 | 2; n: string; exp: "+" | "-"; icon: React.ReactNode };

const contentRows: CRow[] = [
  { l: 1, n: "Bookmarks", exp: "-", icon: <svg width="38" height="46" viewBox="0 0 38 46"><polygon points="0,0 38,0 38,46 19,34 0,46" fill="#cfc28a" /></svg> },
  { l: 2, n: "geo", exp: "+", icon: <FolderIcon c="#8c8c8c" w={46} h={34} /> },
  { l: 2, n: "jshrake@nvidia.com", exp: "+", icon: <FolderIcon c="#8c8c8c" w={46} h={34} /> },
  { l: 2, n: "trimble-rain-sim", exp: "+", icon: <FolderIcon c="#8c8c8c" w={46} h={34} /> },
  {
    l: 1, n: "Omniverse", exp: "-", icon: (
      <svg width="44" height="44" viewBox="0 0 44 44">
        <defs><linearGradient id="omni" x1="0" y1="0" x2="1" y2="1"><stop offset="0" stopColor="#84c400" /><stop offset="1" stopColor="#4a8000" /></linearGradient></defs>
        <circle cx="22" cy="22" r="22" fill="url(#omni)" /><circle cx="23" cy="22" r="9" fill="#1f2125" />
      </svg>
    ),
  },
  { l: 2, n: "localhost", exp: "+", icon: <DriveIcon /> },
  { l: 2, n: "ov-content", exp: "+", icon: <DriveIcon /> },
  { l: 2, n: "ov-hpcviz", exp: "+", icon: <DriveIcon /> },
  {
    l: 2, n: "Add New Connection ...", exp: "+", icon: (
      <svg width="46" height="42" viewBox="0 0 46 42">
        <rect x="1" y="1" width="33" height="28" rx="4" fill="none" stroke="#8c8c8c" strokeWidth="2" />
        <rect x="3" y="13" width="29" height="10" rx="2" fill="#8c8c8c" />
        <path d="M38 28V42M31 35H45" stroke="#8c8c8c" strokeWidth="3" />
      </svg>
    ),
  },
  {
    l: 1, n: "My Computer", exp: "-", icon: (
      <svg width="46" height="40" viewBox="0 0 46 40">
        <rect x="1.5" y="1.5" width="43" height="29" rx="2" fill="none" stroke="#8c8c8c" strokeWidth="3" />
        <rect x="20" y="31" width="6" height="6" fill="#8c8c8c" /><rect x="13" y="36" width="20" height="3" fill="#8c8c8c" />
      </svg>
    ),
  },
  { l: 2, n: "Desktop", exp: "+", icon: <DriveIcon /> },
  { l: 2, n: "Documents", exp: "+", icon: <DriveIcon /> },
  { l: 2, n: "Downloads", exp: "+", icon: <DriveIcon /> },
];

function ContentPanel() {
  const tabs = ["Conte...", "NVIDI...", "Asset...", "Sampl...", "Enviro...", "Materi...", "Consol..."];
  return (
    <div className="w-[905px] shrink-0 h-full border-r-2 border-[#333] flex flex-col">
      <div className="h-[46px] bg-[#2a2b2d] flex gap-[4px] shrink-0">
        {tabs.map((t, i) => (
          <div key={t} className={`w-[125px] rounded-t-[6px] pl-[8px] leading-[46px] whitespace-nowrap overflow-hidden ${i === 0 ? "bg-[#454545] text-[#d8d8d8]" : "bg-[#343536] text-[#7e7e7e]"}`}>{t}</div>
        ))}
      </div>
      <div className="h-[101px] flex items-start pl-[10px] pt-[21px] shrink-0">
        <div className="w-[168px] h-[59px] mt-[3px] rounded-[8px] bg-[#1f2125] flex items-center pl-[8px] gap-[11px] text-[#b4b4b4]">
          <svg width="30" height="30" viewBox="0 0 30 30"><path d="M11 0H19V11H30V19H19V30H11V19H0V11H11Z" fill="#6a9a6e" /></svg>
          Import
        </div>
        <svg width="18" height="28" viewBox="0 0 18 28" className="ml-[23px] mt-[17px]"><path d="M15 2L4 14L15 26" fill="none" stroke="#465456" strokeWidth="6" /></svg>
        <svg width="18" height="28" viewBox="0 0 18 28" className="ml-[40px] mt-[17px]"><path d="M3 2L14 14L3 26" fill="none" stroke="#465456" strokeWidth="6" /></svg>
        <div className="ml-[22px] w-[115px] h-[65px] bg-[#1f2125] relative shrink-0">
          <div className="w-[41px] h-[40px] mt-[2px] border border-[#77888a] bg-[#3d4042] flex items-center justify-center"><Tri c="#c0c0c0" w={26} /></div>
          <svg width="38" height="46" viewBox="0 0 38 46" className="absolute left-[59px] top-[11px]"><polygon points="0,0 38,0 38,46 19,32 0,46" fill="#4a4a4a" /></svg>
        </div>
        <div className="ml-[5px] w-[482px] h-[65px] bg-[#1f2125] flex items-center pl-[20px] relative shrink-0">
          <svg width="32" height="32" viewBox="0 0 32 32"><circle cx="13" cy="13" r="9" fill="none" stroke="#b0b0b0" strokeWidth="4" /><path d="M20 20L30 30" stroke="#b0b0b0" strokeWidth="4" /></svg>
          <span className="ml-[41px] text-[#4f5355]">Search</span>
        </div>
      </div>
      <div className="flex h-[633px] pl-[10px] shrink-0">
        <div className="w-[755px] bg-[#1f2125] overflow-hidden relative text-[#969696]">
          {contentRows.map((r, i) => (
            <div key={i} className="h-[49.9px] flex items-center pl-[25px]">
              {r.l === 2 && <span className="w-[50px] shrink-0" />}
              <Exp plus={r.exp === "+"} c="#9a9a9a" />
              <span className={`${r.l === 1 ? "w-[46px] ml-[17px] mr-[10px]" : "w-[46px] ml-[15px] mr-[11px]"} shrink-0 flex justify-center`}>{r.icon}</span>
              <span className="whitespace-nowrap pt-[1px]">{r.n}</span>
            </div>
          ))}
          <div className="absolute left-[728px] top-[3px] w-[24px] h-[468px] rounded-[10px] bg-[#666]" />
        </div>
        <div className="ml-[5px] w-[131px] bg-[#1f2125] flex flex-col justify-end">
          <div className="h-[50px] mb-[5px] bg-[#3a3b3c] rounded-tl-[8px] pl-[23px] pt-[8px]"><div className="h-[38px] bg-[#26282a]" /></div>
        </div>
      </div>
    </div>
  );
}

function Field({ label, children, val }: { label: string; children?: React.ReactNode; val?: string }) {
  return (
    <div className="flex h-[47px]">
      <div className="w-[949px] pl-[13px] leading-[48px] text-[#b0b0b0]">{label}</div>
      <div className="relative w-[934px] rounded-[5px] bg-[#1f2125] text-[#c4c4c4] leading-[48px] pl-[8px] whitespace-nowrap">
        {val}{children}
      </div>
    </div>
  );
}

function Slide({ label, val, handle }: { label: string; val: string; handle: string }) {
  return (
    <Field label={label}>
      <div className={`absolute top-[3px] bottom-[3px] w-[7px] rounded-[3px] bg-[#8c8c8c] ${handle}`} />
      <div className="absolute inset-0 text-center">{val}</div>
    </Field>
  );
}

function ImportPanel() {
  return (
    <div className="w-[1893px] h-full flex flex-col shrink-0">
      <div className="h-[46px] bg-[#1f2125] shrink-0">
        <div className="w-[412px] h-full rounded-t-[6px] bg-[#454545] pl-[9px] leading-[46px] text-[#c4c4c4] whitespace-nowrap">Import Image Sequences</div>
      </div>
      <div className="pl-[18px] pt-[18px]">
        <div className="w-[419px] h-[55px] rounded-[5px] bg-[#2a2b2c] text-center leading-[55px] text-[#c4c4c4] whitespace-nowrap">Create New Image Sequence</div>
      </div>
      <div className="mt-[8px] flex flex-col gap-[6px]">
        <Field label="Asset Path" val="C:/Users/jshrake/code/kit-slideshow/examples/test/*.png" />
        <Field label="PPI" val="300" />
        <Slide label="Gap" val="0.11" handle="left-[103px]" />
        <Slide label="Curve" val="0.24" handle="left-[224px]" />
        <Slide label="Images Per Row" val="0" handle="left-[3px]" />
      </div>
    </div>
  );
}

export default function App() {
  return (
    <div className="w-[3840px] h-[2088px] overflow-hidden bg-[#454545] text-[29.5px] font-['Noto_Sans',sans-serif] flex flex-col">
      <div className="h-[72px] shrink-0 bg-[#0f0f0f] border-t-[3px] border-t-[#c6a40c] flex items-center pb-[3px] text-[34px] font-['Liberation_Sans',sans-serif] text-[#d8d8d8]">
        <svg width="65" height="64" viewBox="0 0 65 64" className="ml-[3px]">
          <defs><linearGradient id="lg" x1="0" y1="0" x2="1" y2="1"><stop offset="0" stopColor="#84c400" /><stop offset="1" stopColor="#3e7400" /></linearGradient></defs>
          <rect width="65" height="64" rx="2" fill="url(#lg)" />
          <circle cx="37" cy="28" r="27" fill="#2a2a2a" />
          <circle cx="46" cy="14" r="9" fill="#e8e8e8" />
          <rect x="21" y="17" width="17" height="17" fill="#e8e8e8" />
          <polygon points="45,27 55,46 35,46" fill="#e8e8e8" />
        </svg>
        <span className="ml-[23px]">CREATE</span>
        <span className="ml-[24px] text-[#9a9a9a]">2022.3.0</span>
        <span className="ml-[15px] w-[2px] h-[40px] bg-[#76b900]" />
        <span className="ml-[16px]">New Stage*</span>
        <svg width="28" height="4" viewBox="0 0 28 4" className="ml-auto"><rect width="28" height="3" fill="#c8c8c8" /></svg>
        <svg width="26" height="27" viewBox="0 0 26 27" className="ml-[84px]"><rect x="1" y="1" width="24" height="25" fill="none" stroke="#c8c8c8" strokeWidth="2" /></svg>
        <svg width="28" height="28" viewBox="0 0 28 28" className="ml-[85px] mr-[32px]"><path d="M1 1L27 27M27 1L1 27" stroke="#c8c8c8" strokeWidth="1.5" /></svg>
      </div>

      <div className="h-[48px] shrink-0 bg-[#454545] border-b-[2px] border-b-[#0c0c0c] flex items-center text-[#c4c4c4] pl-[12px] box-content">
        <div className="flex gap-[14px] pt-[2px]">
          {["File", "Edit", "Create", "Window", "Tools", "Streaming", "Layout", "Help"].map((m) => <span key={m}>{m}</span>)}
        </div>
        <div className="ml-auto h-[40px] w-[126px] rounded-[6px] bg-[#7b7b7b] flex items-center pl-[17px] gap-[8px] text-[#ececec] text-[29px]">
          <svg width="20" height="36" viewBox="0 0 20 36"><polygon points="11,0 18,0 13,13 20,13 5,36 9,18 2,18" fill="#e6e62a" /></svg>
          <span>LIVE</span>
        </div>
        <div className="ml-[6px] h-[40px] w-[39px] rounded-[6px] bg-[#7b7b7b] flex items-center justify-center">
          <svg width="20" height="14" viewBox="0 0 20 14"><path d="M3 2L10 11L17 2" fill="none" stroke="#d0d0d0" strokeWidth="4" /></svg>
        </div>
        <span className="ml-[12px] text-[#c4c4c4] text-[29px] pt-[2px]">CACHE:</span>
        <span className="ml-[7px] mr-[15px] text-[#76b900] text-[28px] pt-[2px]">ON</span>
      </div>

      <div className="h-[1894px] shrink-0 flex">
        <div className="w-[2800px] shrink-0 flex flex-col border-r-2 border-[#2b2b2b]">
          <div className="h-[1103px] shrink-0 flex border-t-2 border-[#2b2b2b]">
            <LeftToolbar />
            <div className="w-[2px] bg-[#2f2f31] shrink-0" />
            <div className="flex flex-col shrink-0">
              <div className="h-[10px] w-[2576px] pl-[10px] bg-[#3a3a3a]" />
              <div className="pl-[10px]"><Viewport /></div>
            </div>
            <RightToolbar />
          </div>
          <div className="h-[791px] shrink-0 flex">
            <ContentPanel />
            <ImportPanel />
          </div>
        </div>
        <div className="w-[1040px] shrink-0 flex flex-col">
          <StagePanel />
          <PropertyPanel />
        </div>
      </div>

      <div className="h-[57px] shrink-0 border-t-2 border-[#2b2b2b] bg-[#454545]" />

      <div className="h-[15px] shrink-0 relative overflow-hidden bg-[#1f1f1f] border-b-[2px] border-b-[#c6a40c]">
        <div className="absolute left-0 top-0 w-[40px] h-[5px] bg-[#3a3a3a]" />
        <div className="absolute left-[716px] top-[-20px] whitespace-nowrap font-['Liberation_Mono',monospace] text-[37.5px] leading-[42px] text-[#e6e62a]">i.uctlist incompatible xformOpOrder; rotation or translat</div>
        <div className="absolute left-[2037px] top-0 w-[2px] h-full bg-[#444]" />
        <div className="absolute left-[2108px] top-[-20px] whitespace-nowrap font-['Liberation_Mono',monospace] text-[37.5px] leading-[42px] text-[#b8c4cc]">-image-sequence-import.git</div>
      </div>
    </div>
  );
}
